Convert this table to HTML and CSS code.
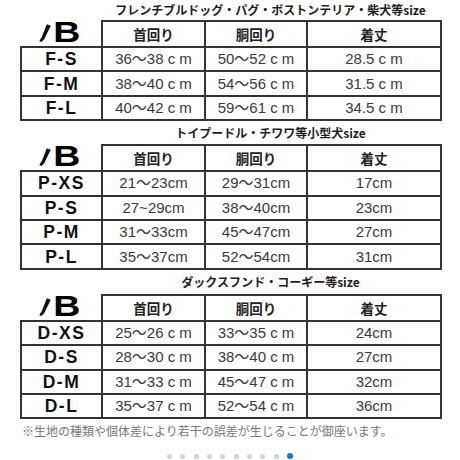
FILE: index.html
```html
<!DOCTYPE html>
<html lang="ja">
<head>
<meta charset="utf-8">
<link rel="stylesheet" href="styles.css">
</head>
<body>
<div class="page">
  <section class="chart">
    <div class="title">フレンチブルドッグ・パグ・ボストンテリア・柴犬等size</div>
    <table class="sizes">
      <colgroup><col class="c1"><col class="c2"><col class="c3"><col class="c4"></colgroup>
      <tr class="head">
        <th class="logo-cell"><span class="logo"><svg class="mark" viewBox="0 0 12 18" width="12" height="18"><path d="M7.8 0.2 L11.8 1.8 L5.2 15.2 L2.4 17.9 L0.4 17.3 L1.4 15.0 L2.6 13.6 Z" fill="#111"/></svg><span class="b">B</span></span></th>
        <th>首回り</th><th>胴回り</th><th>着丈</th>
      </tr>
      <tr><td class="size">F-S</td><td>36～38 c m</td><td>50～52 c m</td><td>28.5 c m</td></tr>
      <tr><td class="size">F-M</td><td>38～40 c m</td><td>54～56 c m</td><td>31.5 c m</td></tr>
      <tr><td class="size">F-L</td><td>40～42 c m</td><td>59～61 c m</td><td>34.5 c m</td></tr>
    </table>
  </section>
  <section class="chart">
    <div class="title">トイプードル・チワワ等小型犬size</div>
    <table class="sizes">
      <colgroup><col class="c1"><col class="c2"><col class="c3"><col class="c4"></colgroup>
      <tr class="head">
        <th class="logo-cell"><span class="logo"><svg class="mark" viewBox="0 0 12 18" width="12" height="18"><path d="M7.8 0.2 L11.8 1.8 L5.2 15.2 L2.4 17.9 L0.4 17.3 L1.4 15.0 L2.6 13.6 Z" fill="#111"/></svg><span class="b">B</span></span></th>
        <th>首回り</th><th>胴回り</th><th>着丈</th>
      </tr>
      <tr><td class="size">P-XS</td><td>21～23cm</td><td>29～31cm</td><td>17cm</td></tr>
      <tr><td class="size">P-S</td><td>27~29cm</td><td>38～40cm</td><td>23cm</td></tr>
      <tr><td class="size">P-M</td><td>31～33cm</td><td>45～47cm</td><td>27cm</td></tr>
      <tr><td class="size">P-L</td><td>35～37cm</td><td>52～54cm</td><td>31cm</td></tr>
    </table>
  </section>
  <section class="chart">
    <div class="title">ダックスフンド・コーギー等size</div>
    <table class="sizes">
      <colgroup><col class="c1"><col class="c2"><col class="c3"><col class="c4"></colgroup>
      <tr class="head">
        <th class="logo-cell"><span class="logo"><svg class="mark" viewBox="0 0 12 18" width="12" height="18"><path d="M7.8 0.2 L11.8 1.8 L5.2 15.2 L2.4 17.9 L0.4 17.3 L1.4 15.0 L2.6 13.6 Z" fill="#111"/></svg><span class="b">B</span></span></th>
        <th>首回り</th><th>胴回り</th><th>着丈</th>
      </tr>
      <tr><td class="size">D-XS</td><td>25～26 c m</td><td>33～35 c m</td><td>24cm</td></tr>
      <tr><td class="size">D-S</td><td>28～30 c m</td><td>38～40 c m</td><td>27cm</td></tr>
      <tr><td class="size">D-M</td><td>31～33 c m</td><td>45～47 c m</td><td>32cm</td></tr>
      <tr><td class="size">D-L</td><td>35～37 c m</td><td>52～54 c m</td><td>36cm</td></tr>
    </table>
  </section>
  <p class="note">※生地の種類や個体差により若干の誤差が生じることが御座います。</p>
  <div class="dots">
    <span class="dot"></span><span class="dot"></span><span class="dot"></span><span class="dot"></span><span class="dot"></span>
    <span class="dot"></span><span class="dot"></span><span class="dot"></span><span class="dot"></span><span class="dot active"></span>
  </div>
</div>
</body>
</html>
```
FILE: styles.css
```css
html, body {
  margin: 0;
  padding: 0;
  background: #fff;
}
.page {
  width: 460px;
  height: 460px;
  overflow: hidden;
  font-family: "Liberation Sans", "Noto Sans CJK JP", sans-serif;
}
.chart {
  margin-left: 20px;
  width: 420px;
}
.title {
  margin-left: 81px;
  width: 339px;
  text-align: center;
  height: 24px;
  line-height: 24px;
  font-family: "Noto Sans CJK JP", sans-serif;
  font-weight: 700;
  font-size: 12px;
  color: #1e1e1e;
  white-space: nowrap;
}
.chart:nth-child(1) .title {
  height: 20px;
  line-height: 20px;
}
.chart:nth-child(2) .title {
  height: 23px;
  line-height: 23px;
}
.sizes {
  width: 420px;
  table-layout: fixed;
  border-collapse: collapse;
}
.c1 { width: 81px; }
.c2 { width: 103px; }
.c3 { width: 102px; }
.c4 { width: 134px; }
.sizes th, .sizes td {
  border: 2px solid #333;
  padding: 0;
  height: 22.4px;
  line-height: 20px;
  text-align: center;
  vertical-align: middle;
  white-space: nowrap;
}
.sizes tr.head th {
  height: 23.4px;
}
.sizes th {
  font-family: "Noto Sans CJK JP", sans-serif;
  font-weight: 700;
  font-size: 13.5px;
  color: #222;
}
.sizes th.logo-cell {
  border: none;
}
.logo {
  display: inline-flex;
  align-items: center;
  margin-right: 6px;
}
.mark {
  display: block;
  margin-top: 2px;
}
.b {
  display: inline-block;
  font-family: "Liberation Sans", sans-serif;
  font-weight: 700;
  font-size: 30px;
  line-height: 22px;
  color: #000;
  transform: scaleX(1.25);
  margin-left: 5px;
}
.sizes td {
  font-size: 15px;
  color: #3a3a3a;
}
.sizes td.size {
  font-weight: 700;
  font-size: 17.5px;
  letter-spacing: 1.5px;
  color: #111;
}
.note {
  margin: 4px 0 0 22px;
  font-family: "Noto Sans CJK JP", sans-serif;
  font-size: 12px;
  line-height: 16px;
  color: #777;
  white-space: nowrap;
}
.dots {
  display: flex;
  justify-content: center;
  align-items: center;
  gap: 8.3px;
  margin-top: 14px;
}
.dot {
  width: 5px;
  height: 5px;
  border-radius: 50%;
  background: #d3d3d3;
}
.dot.active {
  width: 6px;
  height: 6px;
  background: #1a73e8;
}
```
